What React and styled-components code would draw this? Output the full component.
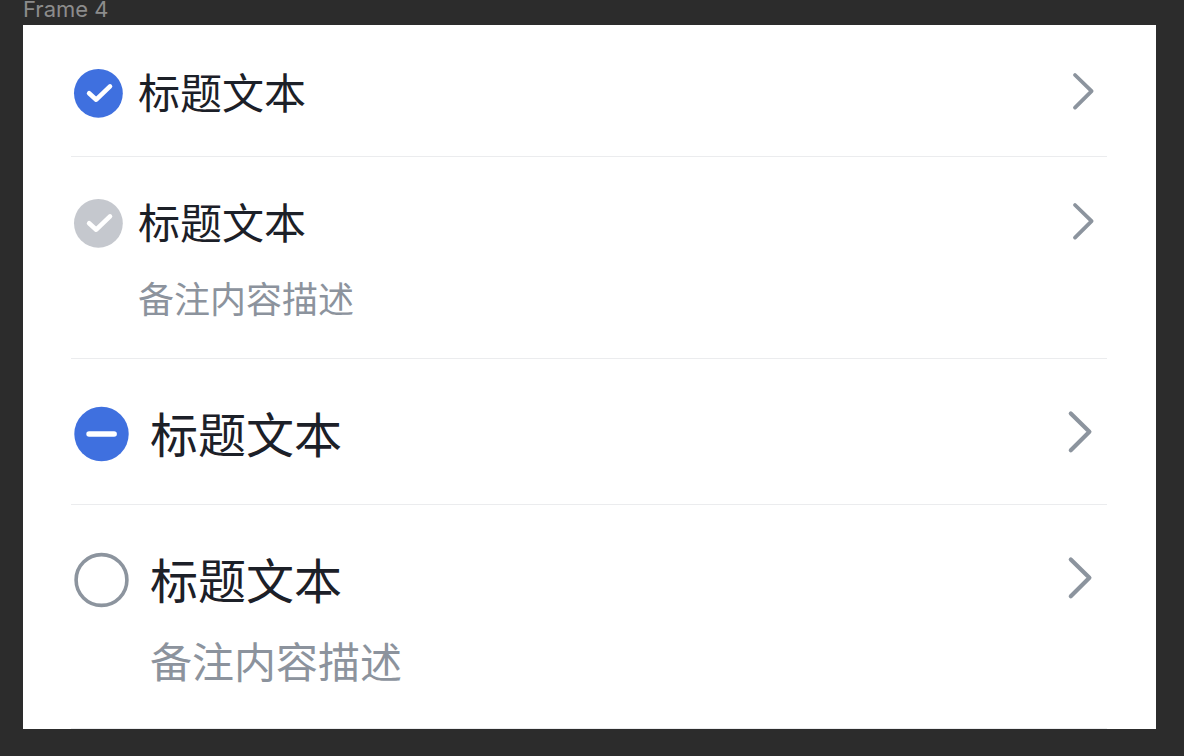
import { useEffect, useRef, useState } from "react";
import styled, { createGlobalStyle } from "styled-components";

const GlobalStyle = createGlobalStyle`
  * {
    box-sizing: border-box;
  }
  body {
    margin: 0;
    background-color: #2c2c2c;
    font-family: "Noto Sans CJK SC", "Noto Sans", sans-serif;
  }
`;

const Canvas = styled.main`
  padding: 0 28px 30px 23px;
`;

const FrameName = styled.h1`
  height: 25px;
  margin: 0;
  color: #8c8c8c;
  font-family: Inter, sans-serif;
  font-size: 22px;
  font-weight: 400;
  line-height: 19px;
`;

const List = styled.ul`
  margin: 0;
  padding: 2px 49px 0 48px;
  list-style: none;
  background-color: #ffffff;
`;

const Item = styled.li`
  display: flex;
  align-items: flex-start;
  padding: ${(props) => (props.$large ? "45px 0 44px" : "39px 0 40px")};
  border-bottom: 1px solid #ebecee;
`;

const Label = styled.label`
  flex: 1;
  display: flex;
  align-items: flex-start;
  gap: ${(props) => (props.$large ? 19 : 13)}px;
`;

const Box = styled.span`
  display: grid;
  place-items: center;
  width: ${(props) => (props.$large ? 60 : 54)}px;
  height: ${(props) => (props.$large ? 56 : 50)}px;

  & > * {
    grid-area: 1 / 1;
  }
`;

const Input = styled.input`
  appearance: none;
  width: 100%;
  height: 100%;
  margin: 0;
  cursor: pointer;

  &:disabled {
    cursor: not-allowed;
  }
`;

const Mark = styled.svg`
  pointer-events: none;
  fill: none;
  stroke-linecap: round;
  stroke-linejoin: round;
`;

const Texts = styled.span`
  display: flex;
  flex-direction: column;
  gap: 30px;
`;

const Title = styled.span`
  color: #1c2028;
  font-size: ${(props) => (props.$large ? 48 : 42)}px;
  line-height: ${(props) => (props.$large ? 56 : 50)}px;
`;

const Desc = styled.span`
  color: #8c939d;
  font-size: ${(props) => (props.$large ? 42 : 36)}px;
  line-height: ${(props) => (props.$large ? 48 : 42)}px;
`;

const Arrow = styled.button`
  display: flex;
  align-items: center;
  height: ${(props) => (props.$large ? 56 : 50)}px;
  padding: 0;
  border: none;
  background: none;
  cursor: pointer;
`;

const items = [
  { id: 1, title: "标题文本", state: "checked" },
  { id: 2, title: "标题文本", desc: "备注内容描述", state: "checked", disabled: true },
  { id: 3, title: "标题文本", state: "mixed", large: true },
  { id: 4, title: "标题文本", desc: "备注内容描述", state: "empty", large: true },
];

const Checkbox = ({ state, disabled, large, onChange }) => {
  const ref = useRef(null);
  const size = large ? 60 : 54;
  const fill = disabled ? "#c5c8ce" : "#3f70df";

  useEffect(() => {
    ref.current.indeterminate = state === "mixed";
  }, [state]);

  return (
    <Box $large={large}>
      <Input ref={ref} type="checkbox" checked={state === "checked"} disabled={disabled} onChange={onChange} />
      <Mark width={size} height={size} viewBox={large ? "-30.5 -30 60 60" : "-27.4 -27.3 54 54"} aria-hidden="true">
        {state === "empty" ? (
          <circle r={large ? 25.4 : 22.6} stroke="#8c949e" strokeWidth="3.6" />
        ) : (
          <circle r={large ? 27.2 : 24.4} fill={fill} />
        )}
        {state === "checked" && <path d="M-9.3 0 L-2.2 6.4 L11.6 -6.9" stroke="#ffffff" strokeWidth="4.6" />}
        {state === "mixed" && <path d="M-12.4 0 H12.6" stroke="#ffffff" strokeWidth="5.6" />}
      </Mark>
    </Box>
  );
};

const ListItem = ({ item }) => {
  const { title, desc, large, disabled } = item;
  const [state, setState] = useState(item.state);

  return (
    <Item $large={large}>
      <Label $large={large}>
        <Checkbox
          state={state}
          disabled={disabled}
          large={large}
          onChange={() => setState(state === "checked" ? "empty" : "checked")}
        />
        <Texts>
          <Title $large={large}>{title}</Title>
          {desc && <Desc $large={large}>{desc}</Desc>}
        </Texts>
      </Label>
      <Arrow type="button" aria-label={title} $large={large}>
        {large ? (
          <Mark width="54" height="54" stroke="#8c949e" strokeWidth="4.2">
            <path d="M17.8 8.4 L36.4 26.8 L17.8 45.2" />
          </Mark>
        ) : (
          <Mark width="48" height="48" stroke="#8c949e" strokeWidth="3.8">
            <path d="M16 8 L32.6 24.2 L16 40.6" />
          </Mark>
        )}
      </Arrow>
    </Item>
  );
};

const App = () => {
  return (
    <>
      <GlobalStyle />
      <Canvas>
        <FrameName>Frame 4</FrameName>
        <List>
          {items.map((item) => (
            <ListItem item={item} key={item.id} />
          ))}
        </List>
      </Canvas>
    </>
  );
};

export default App;
